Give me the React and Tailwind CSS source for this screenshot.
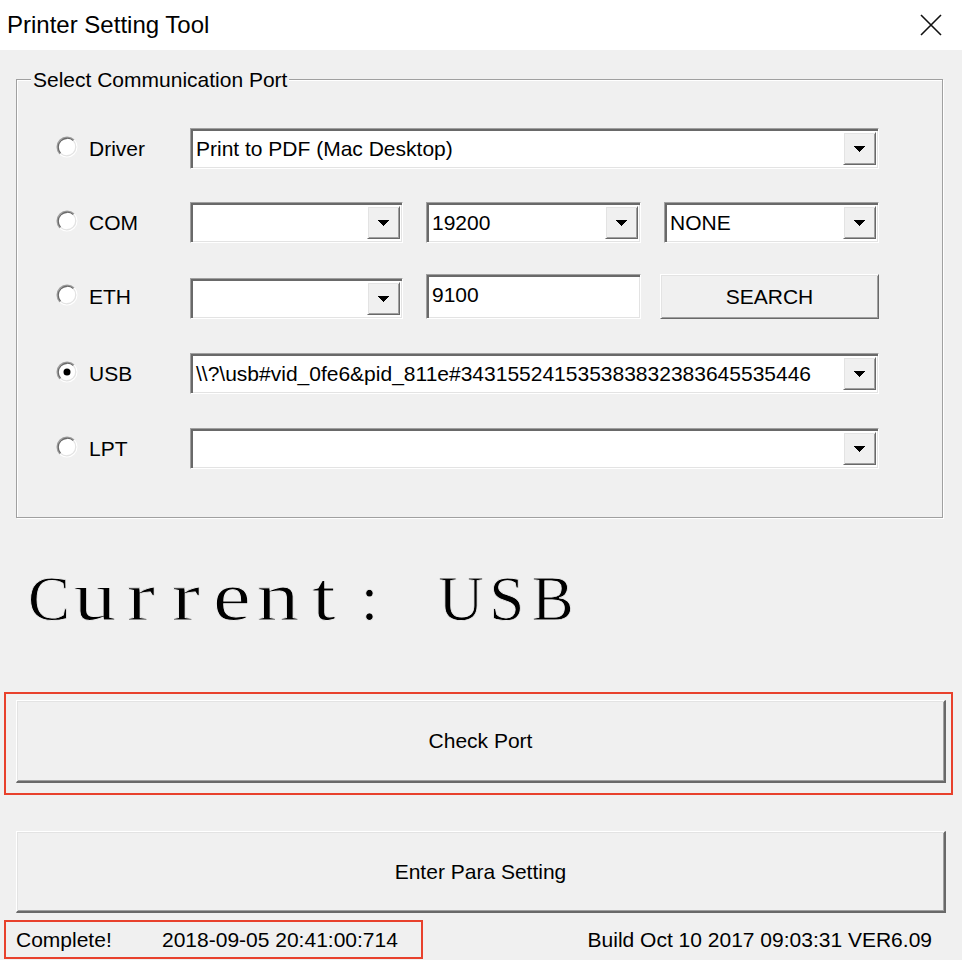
import React from 'react';

// 3D borders in the classic Windows look
const sunken =
  'border border-t-[#a0a0a0] border-l-[#a0a0a0] border-r-white border-b-white shadow-[inset_2px_2px_0_#696969,inset_-1px_-1px_0_#e3e3e3] bg-white';
const raised =
  'border border-t-white border-l-white border-r-[#696969] border-b-[#696969] shadow-[inset_1px_1px_0_#e3e3e3,inset_-1px_-1px_0_#a0a0a0] bg-[#f0f0f0]';
const raisedBig =
  'border border-r-2 border-b-2 border-t-white border-l-white border-r-[#696969] border-b-[#696969] shadow-[inset_1px_1px_0_#e3e3e3,inset_-1px_-1px_0_#a0a0a0] bg-[#f0f0f0]';

function Arrow() {
  return (
    <svg width="11" height="6" viewBox="0 0 11 6" shapeRendering="crispEdges">
      <path
        d="M0 0h11v1h-1v1h-1v1h-1v1h-1v1h-1v1h-1v-1h-1v-1h-1v-1h-1v-1h-1v-1h-1z"
        fill="#000"
      />
    </svg>
  );
}

function Combo({ value = '', width }) {
  return (
    <div className={`flex h-[41px] py-[3px] pr-[2px] ${sunken} ${width}`}>
      <div className="flex-1 overflow-hidden whitespace-nowrap pl-[5px] leading-[33px]">{value}</div>
      <div className={`flex w-[33px] shrink-0 items-center justify-center ${raised}`}>
        <Arrow />
      </div>
    </div>
  );
}

function Radio({ checked }) {
  return (
    <svg width="22" height="22" viewBox="0 0 22 22" className="mb-[4px] shrink-0">
      <circle cx="11" cy="11" r="9.5" fill="#fff" />
      <path d="M3.93 18.07A10 10 0 0 1 18.07 3.93" stroke="#a0a0a0" strokeWidth="1.3" fill="none" />
      <path d="M18.07 3.93A10 10 0 0 1 3.93 18.07" stroke="#fff" strokeWidth="1.3" fill="none" />
      <path d="M4.64 17.36A9 9 0 0 1 17.36 4.64" stroke="#696969" strokeWidth="1.3" fill="none" />
      <path d="M17.36 4.64A9 9 0 0 1 4.64 17.36" stroke="#e3e3e3" strokeWidth="1.3" fill="none" />
      {checked && <circle cx="11" cy="11" r="3.5" fill="#000" />}
    </svg>
  );
}

function PortLabel({ label, checked }) {
  return (
    <div className="flex w-[173px] shrink-0 items-center self-center pl-[39px]">
      <Radio checked={checked} />
      <span className="ml-[11px]">{label}</span>
    </div>
  );
}

// typewriter look: each glyph in a fixed cell, like Courier New
function MonoText({ text }) {
  return (
    <div className="flex h-[76px] pl-[26px] font-['Liberation_Serif','Times_New_Roman',serif] text-[63px] leading-[76px] [-webkit-text-stroke:0.8px_#f0f0f0]">
      {text.split('').map((ch, i) =>
        /[a-z]/.test(ch) ? (
          <span key={i} className="inline-block w-[45.8px] origin-[50%_78%] scale-x-[1.35] scale-y-[1.12] text-center">
            {ch}
          </span>
        ) : (
          <span key={i} className="inline-block w-[45.8px] text-center">
            {ch === ' ' ? '\u00a0' : ch}
          </span>
        )
      )}
    </div>
  );
}

export default function App() {
  const usbPath = '\\\\?\\usb#vid_0fe6&pid_811e#343155241535383832383645535446';

  return (
    <div className="h-[960px] w-[962px] overflow-hidden bg-[#f0f0f0] font-['Liberation_Sans',Arial,sans-serif] text-[21px] text-black">
      {/* title bar */}
      <div className="flex h-[50px] items-center justify-between bg-white pl-[7px] pr-[20px]">
        <span className="text-[24px]">Printer Setting Tool</span>
        <svg width="22" height="22" viewBox="0 0 22 22">
          <path d="M1 1L21 21M21 1L1 21" stroke="#111" strokeWidth="1.6" />
        </svg>
      </div>

      {/* group box */}
      <div className="ml-[16px] mt-[29px] h-[439px] w-[927px] border border-[#a0a0a0] shadow-[1px_1px_0_#fff,inset_1px_1px_0_#fff]">
        <div className="-mt-[12px] ml-[14px] h-[24px] leading-[24px]">
          <span className="bg-[#f0f0f0] px-[2px]">Select Communication Port</span>
        </div>

        <div className="mt-[36px] flex h-[41px]">
          <PortLabel label="Driver" />
          <Combo value="Print to PDF (Mac Desktop)" width="w-[689px]" />
        </div>

        <div className="mt-[33px] flex h-[41px]">
          <PortLabel label="COM" />
          <Combo width="w-[213px]" />
          <div className="ml-[23px]">
            <Combo value="19200" width="w-[215px]" />
          </div>
          <div className="ml-[23px]">
            <Combo value="NONE" width="w-[215px]" />
          </div>
        </div>

        <div className="mt-[31px] flex h-[45px] items-end">
          <PortLabel label="ETH" />
          <Combo width="w-[213px]" />
          <div className={`ml-[23px] h-[45px] w-[215px] pl-[5px] leading-[40px] ${sunken}`}>9100</div>
          <div className={`ml-[19px] flex h-[45px] w-[219px] items-center justify-center ${raised}`}>SEARCH</div>
        </div>

        <div className="mt-[34px] flex h-[41px]">
          <PortLabel label="USB" checked />
          <Combo value={usbPath} width="w-[689px]" />
        </div>

        <div className="mt-[34px] flex h-[41px]">
          <PortLabel label="LPT" />
          <Combo width="w-[689px]" />
        </div>
      </div>

      {/* current port */}
      <div className="mt-[43px]">
        <MonoText text="Current: USB" />
      </div>

      {/* check port, highlighted */}
      <div className="ml-[4px] mt-[55px] w-[949px] border-2 border-[#e8412c] pb-[10px] pl-[10px] pr-[5px] pt-[6px]">
        <div className={`flex h-[83px] items-center justify-center ${raisedBig}`}>Check Port</div>
      </div>

      <div className={`ml-[16px] mt-[36px] flex h-[82px] w-[930px] items-center justify-center ${raisedBig}`}>
        Enter Para Setting
      </div>

      {/* status bar */}
      <div className="mt-[7px] flex h-[39px] items-center">
        <div className="ml-[4px] flex h-[39px] w-[419px] items-center border-2 border-[#e8412c] pl-[10px]">
          <span className="w-[146px]">Complete!</span>
          <span>2018-09-05 20:41:00:714</span>
        </div>
        <span className="ml-auto pr-[30px]">Build Oct 10 2017 09:03:31 VER6.09</span>
      </div>
    </div>
  );
}
